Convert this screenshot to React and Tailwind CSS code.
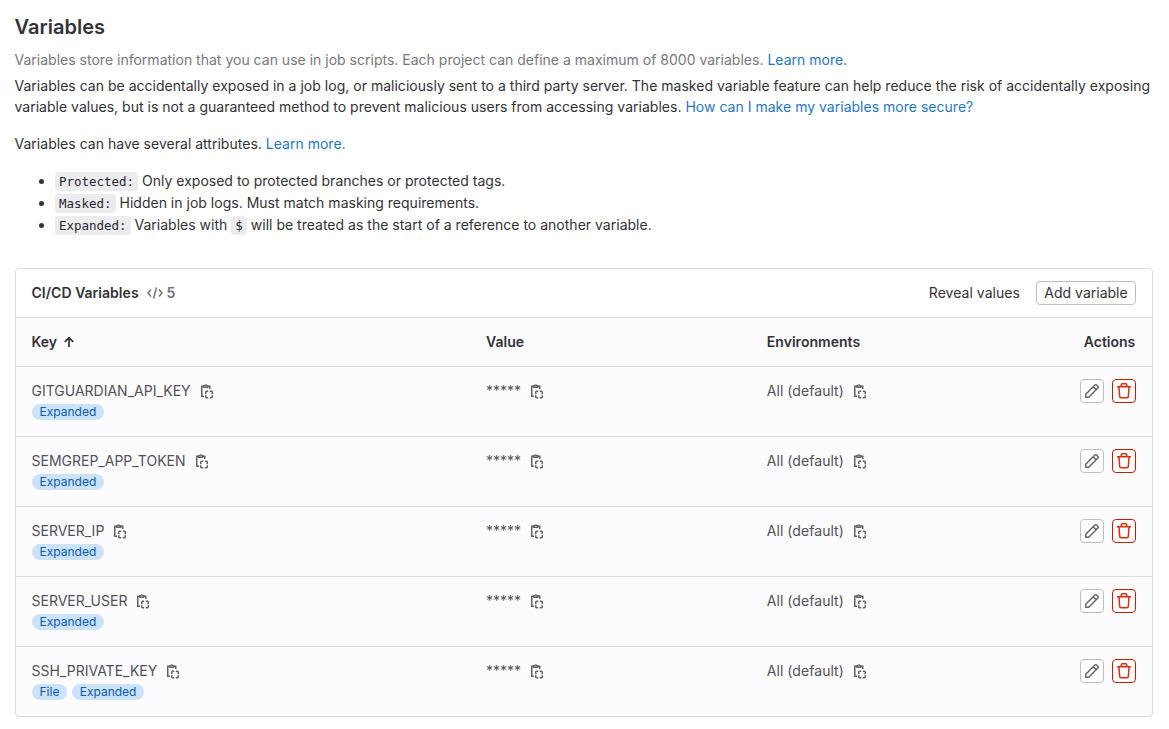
const variables = [
  { key: "GITGUARDIAN_API_KEY", tags: ["Expanded"] },
  { key: "SEMGREP_APP_TOKEN", tags: ["Expanded"] },
  { key: "SERVER_IP", tags: ["Expanded"] },
  { key: "SERVER_USER", tags: ["Expanded"] },
  { key: "SSH_PRIVATE_KEY", tags: ["File", "Expanded"] },
];

const grid = "grid grid-cols-[454.5px_280.8px_1fr_auto] pl-[15.5px] pr-4";

function ClipboardIcon() {
  return (
    <svg className="size-4 shrink-0 text-[#626168]" viewBox="0.5 0 16 16" fill="none" stroke="currentColor" strokeWidth="1.5">
      <path d="M5 3.25H3.25v9.900H5.500M9.500 3.250h1.750V6" />
      <path d="M5.250 4.250V2.600h1.100a.95.95 0 0 1 1.800 0h1.100v1.650z" strokeWidth="1.300" />
      <path d="M7.250 11.300V9a.75.75 0 0 1 .75-.75h1.700M11.300 8.250H13a.75.75 0 0 1 .75.75v2.300M13.750 12.300V14a.75.75 0 0 1-.75.75h-1.700M9.700 14.750H8a.75.75 0 0 1-.75-.75v-1.700" />
    </svg>
  );
}

function PencilIcon() {
  return (
    <svg className="size-4 text-[#626168]" viewBox="0 0 16 16" fill="none" stroke="currentColor" strokeWidth="1.4" strokeLinejoin="round">
      <path d="M1.750 14.250v-3L10.900 2.100a1.200 1.200 0 0 1 1.700 0l1.300 1.300a1.200 1.200 0 0 1 0 1.700l-9.150 9.150zM9.200 3.800l3 3" />
    </svg>
  );
}

function TrashIcon() {
  return (
    <svg className="size-4 text-[#dd2b0e]" viewBox="0 0 16 16" fill="none" stroke="currentColor" strokeWidth="1.5">
      <path d="M1 3.750h14M5.250 3.500V1.750a1 1 0 0 1 1-1h3.500a1 1 0 0 1 1 1V3.500M3 4l.65 9.400a1.500 1.500 0 0 0 1.500 1.350h5.700a1.500 1.500 0 0 0 1.500-1.350L13 4" />
    </svg>
  );
}

function Code({ children }) {
  return (
    <code className="rounded-[4px] bg-[#ececef] px-1 py-[2px] font-['DejaVu_Sans_Mono',monospace] text-[12.5px] leading-none tracking-[-0.02px] text-[#28272d]">
      {children}
    </code>
  );
}

function Link({ children }) {
  return <a href="#" className="text-[#1f78c8]">{children}</a>;
}

export default function App() {
  return (
    <main className="h-[729px] w-[1169px] overflow-hidden bg-white pl-[15px] pr-4 pt-[15px] font-['Inter','Liberation_Sans',sans-serif] text-[14px] leading-[21px] text-[#333238]">
      <h1 className="-ml-[0.5px] text-[20px] font-semibold leading-6 tracking-[0.04px]">Variables</h1>
      <p className="-ml-[0.5px] mt-[10px] tracking-[0.008px] text-[#79787c]">
        Variables store information that you can use in job scripts. Each project can define a maximum of 8000 variables. <Link>Learn more.</Link>
      </p>
      <p className="-ml-[0.5px] mt-[5px] whitespace-nowrap tracking-[0.017px]">
        Variables can be accidentally exposed in a job log, or maliciously sent to a third party server. The masked variable feature can help reduce the risk of accidentally exposing
        <br />
        variable values, but is not a guaranteed method to prevent malicious users from accessing variables. <Link>How can I make my variables more secure?</Link>
      </p>
      <p className="-ml-[0.5px] mt-4 tracking-[0.015px]">Variables can have several attributes. <Link>Learn more.</Link></p>
      <ul className="mt-4 list-disc pl-10 leading-[22px] tracking-[0.01px]">
        <li className="h-[22px]"><Code>Protected:</Code> Only exposed to protected branches or protected tags.</li>
        <li className="h-[22px]"><Code>Masked:</Code> Hidden in job logs. Must match masking requirements.</li>
        <li className="h-[22px]"><Code>Expanded:</Code> Variables with <Code>$</Code> will be treated as the start of a reference to another variable.</li>
      </ul>

      <section className="mt-8 overflow-hidden rounded-[4px] border border-[#dcdcde] bg-[#fcfbfe]">
        <header className="flex h-12 items-center bg-white pl-[15.5px] pr-4">
          <h2 className="pb-0.5 font-semibold tracking-[0.03px]">CI/CD Variables</h2>
          <svg className="ml-2 size-4 text-[#737278]" viewBox="0 0 16 16" fill="none" stroke="currentColor" strokeWidth="1.5">
            <path d="M4 4.500.900 8 4 11.500M12 4.500 15.100 8 12 11.500M9.500 2.500l-3 11" />
          </svg>
          <span className="ml-1 pb-0.5 font-semibold text-[#737278]">5</span>
          <button className="ml-auto pb-0.5 tracking-[0.04px]">Reveal values</button>
          <button className="ml-4 h-6 w-[100px] whitespace-nowrap rounded-[4px] border border-[#bfbfc3] bg-white leading-5">Add variable</button>
        </header>
        <div className={`${grid} h-[49px] items-center border-t border-[#dcdcde] font-semibold`}>
          <div className="flex items-center">
            <span className="pb-0.5">Key</span>
            <svg className="ml-1 size-4" viewBox="0 0 16 16" fill="none" stroke="currentColor" strokeWidth="1.7">
              <path d="M8 13V4M3.800 7.900 8 3.700l4.200 4.200" />
            </svg>
          </div>
          <div className="pb-0.5 tracking-[0.04px]">Value</div>
          <div className="pb-0.5 tracking-[0.03px]">Environments</div>
          <div className="pb-0.5 pr-[0.7px]">Actions</div>
        </div>
        {variables.map((v) => (
          <div key={v.key} className={`${grid} h-[70px] border-t border-[#dcdcde] pt-[13px] text-[#535158]`}>
            <div>
              <div className="flex items-center gap-2">{v.key}<ClipboardIcon /></div>
              <div className="flex gap-[4.3px]">
                {v.tags.map((t) => (
                  <span key={t} className="mt-[3px] h-4 rounded-full bg-[#cbe2f9] px-2 text-[12px] leading-4 text-[#0b5cad]">{t}</span>
                ))}
              </div>
            </div>
            <div className="flex items-center gap-[7.500px] self-start">*****<ClipboardIcon /></div>
            <div className="flex items-center gap-[8.300px] self-start tracking-[0.05px]">All (default)<ClipboardIcon /></div>
            <div className="-mt-[1px] flex gap-2 self-start">
              <button className="flex size-6 items-center justify-center rounded-[4px] border border-[#bfbfc3] bg-white"><PencilIcon /></button>
              <button className="flex size-6 items-center justify-center rounded-[4px] border border-[#c91c00] bg-white"><TrashIcon /></button>
            </div>
          </div>
        ))}
      </section>
    </main>
  );
}
